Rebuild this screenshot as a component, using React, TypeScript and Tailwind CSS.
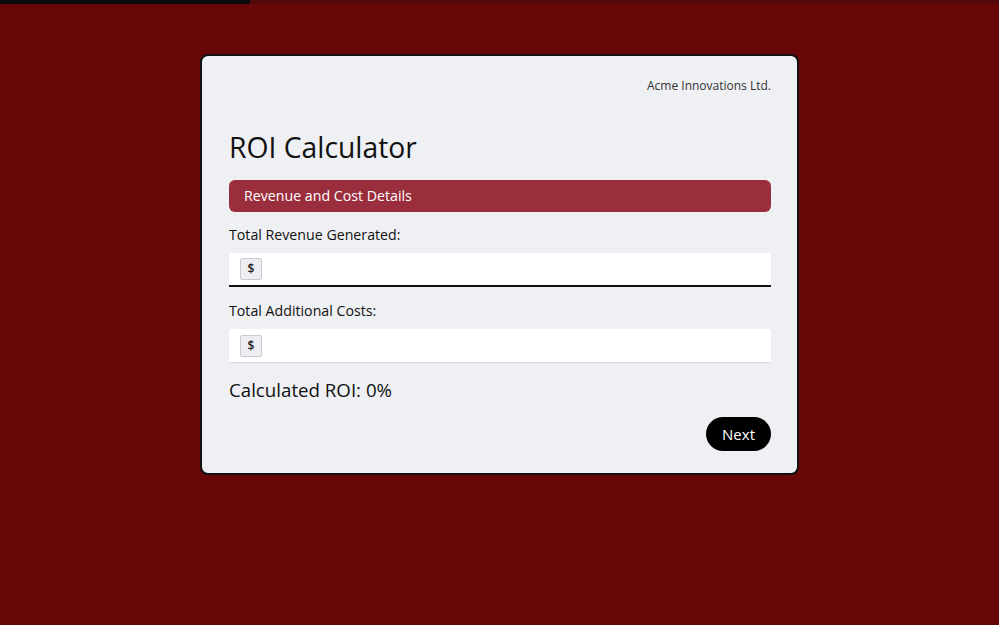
import { useState } from 'react';

const FONT = { fontFamily: '"Open Sans", "Noto Sans", sans-serif' };

function CurrencyField({ label, focused }: { label: string; focused?: boolean }) {
  return (
    <div className="flex flex-col">
      <label className="text-[14.2px] leading-[20px] text-[#111] mb-[8px]">{label}</label>
      <div
        className={
          'flex h-[34px] items-center bg-white px-[11px] ' +
          (focused ? 'border-b-2 border-[#111]' : 'border-b border-[#d6d7da]')
        }
      >
        <span className="flex h-[22px] w-[22px] items-center justify-center rounded-[2px] border border-[#c9cbce] bg-[#eceef1] text-[12px] font-semibold text-[#222]">
          $
        </span>
        <input className="ml-2 flex-1 bg-transparent text-[15px] outline-none" />
      </div>
    </div>
  );
}

export default function App() {
  const [roi] = useState(0);

  return (
    <div className="min-h-[625px] w-full bg-[#680708]" style={FONT}>
      <div className="h-[4px] w-full bg-[#55080b]">
        <div className="h-full w-[25%] bg-[#0b0b0b]" />
      </div>

      <div className="flex justify-center pt-[50px]">
        <div className="w-[599px] rounded-[8px] border-2 border-[#111] bg-[#eff0f3] pl-[27px] pr-[26px] pt-[20px] pb-[22px]">
          <div className="text-right text-[12px] leading-[20px] text-[#333]">Acme Innovations Ltd.</div>

          <h1 className="mt-[31px] text-[28.3px] leading-[40px] text-[#111]">ROI Calculator</h1>

          <div className="mt-[13px] flex h-[32px] items-center rounded-[6px] bg-[#9b2e3d] pl-[15px] text-[14.2px] text-white">
            Revenue and Cost Details
          </div>

          <div className="mt-[13px] flex flex-col gap-[14px]">
            <CurrencyField label="Total Revenue Generated:" focused />
            <CurrencyField label="Total Additional Costs:" />
          </div>

          <div className="mt-[14px] text-[18.7px] leading-[26px] text-[#111]">Calculated ROI: {roi}%</div>

          <div className="mt-[14px] flex justify-end">
            <button className="h-[34px] rounded-full bg-black px-[16px] text-[15px] text-white">Next</button>
          </div>
        </div>
      </div>
    </div>
  );
}
